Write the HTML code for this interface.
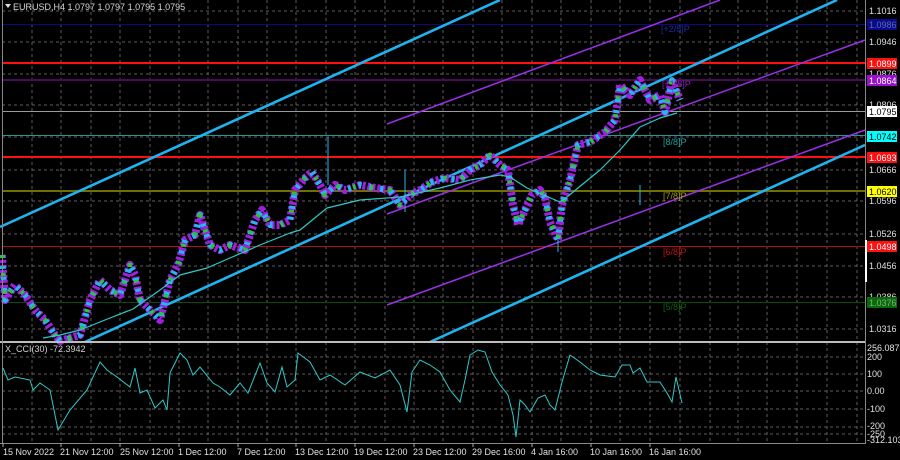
<!DOCTYPE html>
<html><head><meta charset="utf-8"><style>
html,body{margin:0;padding:0;background:#000;width:900px;height:460px;overflow:hidden}
svg{display:block}
text{font-family:"Liberation Sans",sans-serif;font-size:9px}
</style></head><body>
<svg width="900" height="460" viewBox="0 0 900 460" xmlns="http://www.w3.org/2000/svg">
<defs>
<polyline id="pp" points="2,255 5,300 15,285 25,295 35,310 45,320 55,335 60,341 80,335 90,300 100,280 110,290 120,295 130,265 135,275 140,300 150,310 160,320 165,300 170,280 178,265 185,240 195,235 200,215 210,245 220,250 230,245 245,250 255,220 262,210 270,225 280,225 290,220 295,190 305,178 312,172 320,185 325,195 335,185 345,190 360,185 375,188 390,190 400,205 410,195 420,190 432,182 445,178 460,180 470,170 480,165 490,155 500,165 508,170 513,205 518,225 525,210 532,195 540,190 545,198 550,222 558,240 562,205 570,180 578,145 590,142 605,132 615,120 620,85 630,95 640,80 650,100 660,95 665,112 672,80 680,100"/>
</defs>
<rect width="900" height="460" fill="#000"/>
<g stroke="#5e5e5e" stroke-width="1" stroke-dasharray="3,3" shape-rendering="crispEdges">
<path d="M32 0V443M61 0V443M91 0V443M120 0V443M150 0V443M179 0V443M208 0V443M238 0V443M267 0V443M296 0V443M326 0V443M355 0V443M385 0V443M414 0V443M443 0V443M473 0V443M502 0V443M532 0V443M561 0V443M591 0V443M620 0V443M650 0V443M680 0V443M710 0V443M738 0V443M767 0V443M797 0V443M827 0V443M857 0V443"/>
<path d="M2 11H865M2 42H865M2 74H865M2 105H865M2 137H865M2 170H865M2 201H865M2 234H865M2 266H865M2 297H865M2 329H865"/>
<path d="M2 357H865M2 374H865M2 391H865M2 409H865M2 427H865M2 434H865"/>
</g>
<g shape-rendering="crispEdges">
<rect x="2" y="24" width="863" height="1" fill="#0a0a7a"/>
<rect x="2" y="62" width="863" height="2" fill="#ff1010"/>
<rect x="2" y="79" width="863" height="2" fill="#4a0a5a"/>
<rect x="2" y="111" width="863" height="1" fill="#9a9a9a"/>
<rect x="2" y="135" width="863" height="1" fill="#1a9a9a"/>
<rect x="2" y="156" width="863" height="2" fill="#ff1010"/>
<rect x="2" y="190" width="863" height="2" fill="#707000"/>
<rect x="2" y="246" width="863" height="1" fill="#b01010"/>
<rect x="2" y="302" width="863" height="1" fill="#0a4a0a"/>
</g>
<g stroke="#9a30e6" stroke-width="1.5" fill="none">
<path d="M387 124L720 0"/>
<path d="M387 214L865 40"/>
<path d="M387 305L865 130"/>
</g>
<g stroke="#1eb4f0" stroke-width="2.6" fill="none">
<path d="M0 227L500 0"/>
<path d="M85 342L837 0"/>
<path d="M430 342L865 145"/>
</g>
<g fill="none" stroke-linejoin="round">
<use href="#pp" stroke="#a020e0" stroke-width="8" stroke-dasharray="3,2"/>
<use href="#pp" stroke="#22b8f0" stroke-width="6" stroke-dasharray="3,8"/>
<use href="#pp" stroke="#30c040" stroke-width="5" stroke-dasharray="3,15"/>
<path d="M328 137V185M405 170V212M640 185V205M558 240V252" stroke="#22b8f0" stroke-width="1"/>
<polyline stroke="#30c8c8" stroke-width="1.2" points="43,338 60,335 80,330 110,318 133,309 160,290 180,275 207,268 230,258 260,245 290,233 300,230 327,208 360,200 400,197 440,188 470,180 500,175 510,177 527,188 560,202 567,197 600,170 620,150 640,127 660,118 677,113"/>
</g>
<rect x="0" y="341" width="865" height="2" fill="#bdbdbd"/>
<rect x="2" y="0" width="1" height="443" fill="#888"/>
<rect x="865" y="0" width="1" height="443" fill="#888"/>
<rect x="0" y="443" width="866" height="1" fill="#888"/>
<polyline fill="none" stroke="#30c8c8" stroke-width="1" points="3,368 8,380 15,377 30,380 33,390 40,383 50,390 58,430 70,410 87,390 100,362 107,370 117,377 130,387 135,368 140,393 147,390 155,408 163,400 167,410 170,373 180,353 187,360 193,375 200,367 213,383 220,387 230,395 240,383 248,393 260,363 267,383 275,392 282,367 287,387 295,380 298,353 310,362 320,380 330,375 345,385 360,372 375,378 390,370 400,385 407,412 412,372 420,360 430,365 440,372 450,390 460,402 465,380 470,355 478,350 485,352 492,372 500,385 508,395 513,415 516,437 520,400 525,405 530,412 538,398 545,395 550,405 555,410 562,382 570,355 580,362 590,370 600,375 615,377 622,365 630,365 633,373 640,368 647,382 660,382 667,393 672,402 676,377 682,403"/>
<text x="5" y="352" fill="#d0d0d0">X_CCI(30) -72.3942</text>
<path d="M5 4L11 4L8 8Z" fill="#ddd"/>
<text x="13" y="10" fill="#d8d8d8">EURUSD,H4  1.0797 1.0797 1.0795 1.0795</text>
<g font-size="9">
<text x="661" y="32" fill="#1a2aa0">[+2/8]P</text>
<text x="662" y="87" fill="#8a20c0">[+1/8]P</text>
<text x="663" y="145" fill="#1aa0a0">[8/8]P</text>
<text x="663" y="199" fill="#a0a000">[7/8]P</text>
<text x="663" y="255" fill="#c01010">[6/8]P</text>
<text x="663" y="310" fill="#106010">[5/8]P</text>
</g>
<g fill="#e0e0e0">
<text x="869" y="14">1.1016</text>
<text x="869" y="45">1.0946</text>
<text x="869" y="77">1.0876</text>
<text x="869" y="108">1.0806</text>
<text x="869" y="173">1.0666</text>
<text x="869" y="204">1.0596</text>
<text x="869" y="237">1.0526</text>
<text x="869" y="269">1.0456</text>
<text x="869" y="300">1.0386</text>
<text x="869" y="332">1.0316</text>
<text x="867" y="351">256.0879</text>
<text x="867" y="360">200</text>
<text x="867" y="377">100</text>
<text x="867" y="394">0.00</text>
<text x="867" y="412">-100</text>
<text x="867" y="429">-200</text>
<text x="867" y="437">-250</text>
<text x="867" y="443">-312.1033</text>
</g>
<g font-size="9">
<rect x="867" y="19" width="30" height="11" fill="#0a0a8a"/><text x="869" y="28" fill="#5a6ab0">1.0986</text>
<rect x="867" y="58" width="30" height="11" fill="#ff1010"/><text x="869" y="67" fill="#fff">1.0899</text>
<rect x="867" y="75" width="30" height="11" fill="#9a10d0"/><text x="869" y="84" fill="#fff">1.0864</text>
<rect x="867" y="106" width="30" height="11" fill="#fff"/><text x="869" y="115" fill="#000">1.0795</text>
<rect x="867" y="131" width="30" height="11" fill="#00ffff"/><text x="869" y="140" fill="#000">1.0742</text>
<rect x="867" y="152" width="30" height="11" fill="#ff1010"/><text x="869" y="161" fill="#fff">1.0693</text>
<rect x="867" y="186" width="30" height="11" fill="#ffff00"/><text x="869" y="195" fill="#000">1.0620</text>
<rect x="867" y="241" width="30" height="11" fill="#ff1010"/><text x="869" y="250" fill="#fff">1.0498</text>
<rect x="867" y="297" width="30" height="11" fill="#0a6a0a"/><text x="869" y="306" fill="#7ab07a">1.0376</text>
<rect x="865" y="240" width="2" height="42" fill="#fff"/>
</g>
<g fill="#e0e0e0">
<text x="3" y="455">15 Nov 2022</text>
<text x="60" y="455">21 Nov 12:00</text>
<text x="120" y="455">25 Nov 12:00</text>
<text x="178" y="455">1 Dec 12:00</text>
<text x="237" y="455">7 Dec 12:00</text>
<text x="295" y="455">13 Dec 12:00</text>
<text x="354" y="455">19 Dec 12:00</text>
<text x="413" y="455">23 Dec 12:00</text>
<text x="472" y="455">29 Dec 16:00</text>
<text x="531" y="455">4 Jan 16:00</text>
<text x="590" y="455">10 Jan 16:00</text>
<text x="649" y="455">16 Jan 16:00</text>
</g>
<g stroke="#aaa" shape-rendering="crispEdges"><path d="M3 443V447M61 443V447M120 443V447M179 443V447M238 443V447M296 443V447M355 443V447M414 443V447M473 443V447M532 443V447M591 443V447M650 443V447"/></g>
</svg>
</body></html>
